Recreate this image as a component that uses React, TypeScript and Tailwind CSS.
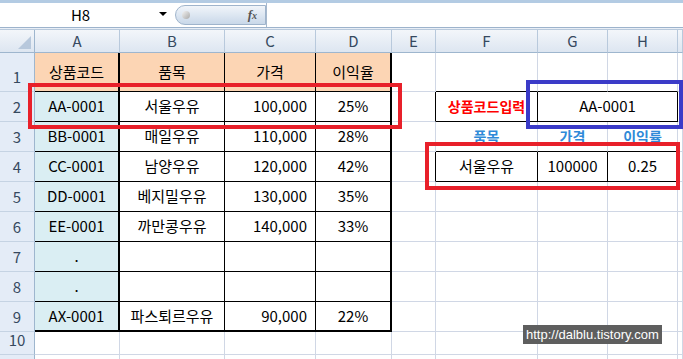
import React from "react";

type Edge = "g" | "k" | "k2" | "n";

const rightCls: Record<Edge, string> = {
  g: "border-r border-r-[#d0d7e5]",
  k: "border-r border-r-black",
  k2: "border-r-2 border-r-black",
  n: "",
};
const bottomCls: Record<Edge, string> = {
  g: "border-b border-b-[#d0d7e5]",
  k: "border-b border-b-black",
  k2: "border-b-2 border-b-black",
  n: "",
};

interface CellProps {
  children?: React.ReactNode;
  r?: Edge;
  b?: Edge;
  className?: string;
  label?: "red" | "blue";
}

function Cell({ children, r = "g", b = "g", className = "", label }: CellProps) {
  // label cells of the lookup table use bold coloured text
  const text =
    label === "red"
      ? "text-[14px] font-bold text-[#ff0000]"
      : label === "blue"
        ? "text-[14px] font-bold text-[#2f8ad8]"
        : "text-[15px] text-black";
  return (
    <div
      className={`flex items-center justify-center overflow-hidden whitespace-nowrap ${text} ${rightCls[r]} ${bottomCls[b]} ${className}`}
    >
      {children}
    </div>
  );
}

function RowHead({ n }: { n?: number }) {
  return (
    <div className="flex items-end justify-center pb-[3px] bg-[#e4ecf7] border-r border-r-[#9eb6ce] border-b border-b-[#c5d3e3] text-[15px] text-[#36495f]">
      {n}
    </div>
  );
}

const products = [
  ["AA-0001", "서울우유", "100,000", "25%"],
  ["BB-0001", "매일우유", "110,000", "28%"],
  ["CC-0001", "남양우유", "120,000", "42%"],
  ["DD-0001", "베지밀우유", "130,000", "35%"],
  ["EE-0001", "까만콩우유", "140,000", "33%"],
  [".", "", "", ""],
  [".", "", "", ""],
  ["AX-0001", "파스퇴르우유", "90,000", "22%"],
];

const cols = ["A", "B", "C", "D", "E", "F", "G", "H", ""];

export default function App() {
  return (
    <div className="relative w-[683px] h-[359px] overflow-hidden bg-white font-['Noto_Sans_CJK_KR',sans-serif]">
      {/* formula bar */}
      <div className="flex h-[27px] border-t-[3px] border-t-[#b3cbe3] bg-white">
        <div className="relative w-[175px] flex items-center justify-center text-[15px] text-black">
          <span className="-ml-[14px]">H8</span>
          <span className="absolute right-[8px] top-[9px] w-0 h-0 border-l-[4px] border-r-[4px] border-t-[4px] border-l-transparent border-r-transparent border-t-black" />
        </div>
        <div className="my-[2px] w-[91px] flex items-center justify-between rounded-l-full border border-[#9fb4cc] bg-gradient-to-b from-[#f1f5fa] to-[#c9d8e9] pl-[6px] pr-[8px]">
          <span className="w-[8px] h-[8px] rounded-full bg-gradient-to-br from-[#f4f4f4] to-[#a9a9a9]" />
          <span className="font-['Liberation_Serif',serif] italic text-[13px] font-bold text-[#555]">
            f<span className="text-[10px]">x</span>
          </span>
        </div>
        <div className="flex-1 border-l border-l-[#a6b8cd]" />
      </div>
      <div className="h-[3px] border-t border-t-[#9db3cc] border-b border-b-[#b8c9dc] bg-[#e8eef6]" />

      {/* sheet */}
      <div className="grid grid-cols-[35px_85px_105px_91px_76px_44px_102px_70px_70px_1fr] grid-rows-[23px_39px_30px_30px_30px_30px_30px_30px_30px_30px_23px_23px]">
        {/* column headers */}
        <div className="relative bg-gradient-to-b from-[#f3f6fa] to-[#dde6f1] border-r border-r-[#9eb6ce] border-b border-b-[#9eb6ce]">
          <span className="absolute right-[3px] bottom-[3px] w-0 h-0 border-l-[13px] border-l-transparent [border-bottom:13px_solid_#b7c8dc]" />
        </div>
        {cols.map((c, i) => (
          <div
            key={i}
            className="flex items-center justify-center bg-gradient-to-b from-[#f3f6fa] to-[#dde6f1] border-r border-r-[#b8c9dc] border-b border-b-[#9eb6ce] text-[15px] text-[#36495f]"
          >
            {c}
          </div>
        ))}

        {/* row 1 */}
        <RowHead n={1} />
        <Cell r="k2" b="k" className="bg-[#fcd5b4]">상품코드</Cell>
        <Cell r="k" b="k" className="bg-[#fcd5b4]">품목</Cell>
        <Cell r="k" b="k" className="bg-[#fcd5b4]">가격</Cell>
        <Cell r="k2" b="k" className="bg-[#fcd5b4]">이익율</Cell>
        <Cell />
        <Cell b="k" />
        <Cell b="k" />
        <Cell b="k" />
        <Cell />

        {products.map((p, i) => {
          const row = i + 2;
          const bb: Edge = row === 9 ? "k2" : "k";
          return (
            <React.Fragment key={row}>
              <RowHead n={row} />
              <Cell r="k2" b={bb} className="bg-[#daeef3]">
                {p[0]}
              </Cell>
              <Cell r="k" b={bb}>{p[1]}</Cell>
              <Cell r="k" b={bb} className="justify-end pr-[8px]">
                {p[2]}
              </Cell>
              <Cell r="k2" b={bb}>{p[3]}</Cell>
              {row === 2 && (
                <>
                  <Cell r="k" />
                  <Cell r="k" b="k" label="red">
                    상품코드입력
                  </Cell>
                  <Cell r="k" b="k" className="col-span-2">
                    AA-0001
                  </Cell>
                </>
              )}
              {row === 3 && (
                <>
                  <Cell />
                  <Cell b="k" label="blue">품목</Cell>
                  <Cell b="k" label="blue">가격</Cell>
                  <Cell b="k" label="blue">이익률</Cell>
                </>
              )}
              {row === 4 && (
                <>
                  <Cell r="k" />
                  <Cell r="k" b="k">서울우유</Cell>
                  <Cell r="k" b="k">100000</Cell>
                  <Cell r="k" b="k">0.25</Cell>
                </>
              )}
              {row > 4 && (
                <>
                  <Cell />
                  <Cell />
                  <Cell />
                  <Cell />
                </>
              )}
              <Cell />
            </React.Fragment>
          );
        })}

        <RowHead n={10} />
        {cols.map((_, i) => (
          <Cell key={`r10-${i}`} />
        ))}
        <RowHead />
        {cols.map((_, i) => (
          <Cell key={`r11-${i}`} />
        ))}
      </div>

      {/* highlight boxes */}
      <div className="absolute left-[28px] top-[83px] w-[374px] h-[46px] border-4 border-[#e8202a]" />
      <div className="absolute left-[526px] top-[80px] w-[157px] h-[49px] border-4 border-[#3b3bc8]" />
      <div className="absolute left-[425px] top-[142px] w-[255px] h-[48px] border-4 border-[#e8202a]" />

      {/* watermark */}
      <div className="absolute left-[523px] top-[325px] h-[19px] px-[3px] flex items-center bg-[#5e5e5e] text-white text-[13px] font-['Liberation_Sans',sans-serif]">
        http://dalblu.tistory.com
      </div>
    </div>
  );
}
